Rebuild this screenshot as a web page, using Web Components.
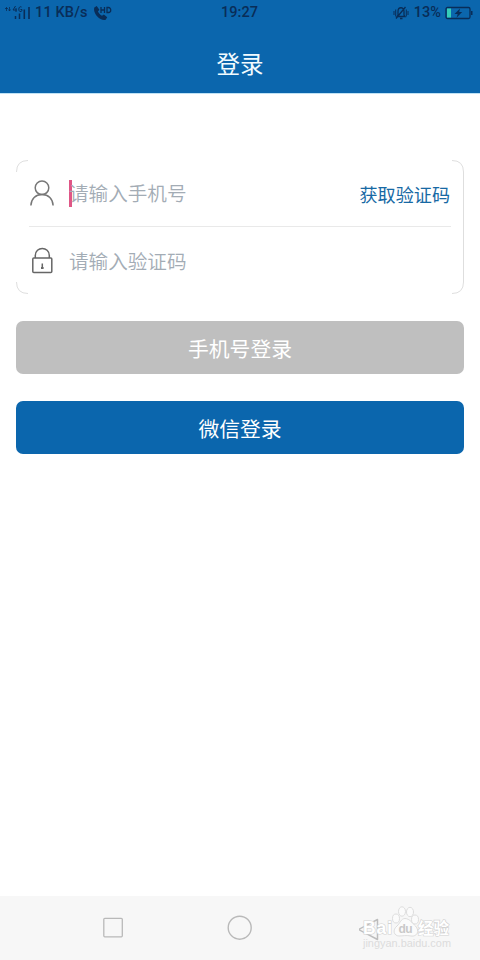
<!DOCTYPE html>
<html lang="zh-CN">
<head>
<meta charset="utf-8">
<title>登录</title>
<style>
html,body{margin:0;height:100%;background:#fff}
body{font-family:Roboto,"Noto Sans CJK SC",sans-serif}
</style>
</head>
<body>
<login-screen></login-screen>
<script>
const define = (name, html) => {
  const t = document.createElement('template');
  t.innerHTML = html;
  customElements.define(name, class extends HTMLElement {
    constructor() {
      super();
      this.attachShadow({ mode: 'open' }).append(t.content.cloneNode(true));
    }
  });
};

define('status-bar', `
<style>
:host{display:grid;grid-template-columns:1fr auto 1fr;align-items:center;height:25px;padding:0 6px 0 5px;color:#092d58;font-size:14.5px;font-weight:500;line-height:25px;white-space:nowrap}
div{display:flex;align-items:center}
.end{justify-content:flex-end}
svg{display:block;flex:none}
</style>
<div>
<svg width="26" height="18" viewBox="0 0 26 18"><g fill="none" stroke="currentColor"><path d="M1.500 3v4M0 4.500h3M4.500 3v4M3.500 5.500l1 1.500 1-1.500" stroke-width=".8"/><path d="M10.500 2l-2.500 4h4M11 4v4M16.500 3c-3-1.500-3.500 4-1.500 4.500 1.500.3 2-.5 2-2h-1.500" stroke-width="1"/><path d="M10.500 12v3M14.500 9.500V15" stroke-width="1.500"/><path d="M19.300 5.500v9.500M24 3v12" stroke-width="1.600"/></g></svg>
<span style="margin-left:-1px;margin-right:5px;padding-left:5px;letter-spacing:.15px">11 KB/s</span>
<svg width="20" height="16" viewBox="0 0 20 16"><path d="M1.300 2.400L3.700 1l2.700 3.700-1.500 1.800c1 2 2.300 3.200 4.100 4.200l1.900-1.300 3.300 2.900-1.500 2.500C7.300 16.500-.5 8.500 1.300 2.400Z" fill="currentColor"/><path d="M8 2v6M11.500 2v6M8 5h3.500M14 2.500v5h1.500c3 0 3-5 0-5Z" fill="none" stroke="currentColor" stroke-width="1.300"/></svg>
</div>
<span>19:27</span>
<div class="end">
<svg width="16" height="14" viewBox="0 0 16 14"><g fill="none" stroke="currentColor"><path d="M1 5v4M2.700 3.500v7M15 5v4M13.300 3.500v7" stroke-width="1"/><path d="M4 10.500h8L11 9V5.500c0-5-6-5-6 0V9ZM7 12.500h2.500M3 12.500L12.500 1" stroke-width="1.300"/></g></svg>
<span style="margin:0 4px 0 5px">13%</span>
<svg width="29" height="14" viewBox="0 0 29 14"><rect x="1" y="1.500" width="24" height="11" rx="1.500" fill="none" stroke="currentColor" stroke-width="1.300"/><rect x="2" y="2.500" width="4" height="9" fill="#35cdb9"/><path d="M26 5h1.500v4H26M15 2.500L9.500 8h3.200L11.500 11.800 17.200 6h-3Z" fill="currentColor"/></svg>
</div>`);

define('app-header', `
<style>
:host{display:block;background:#0b66ad;border-bottom:1px solid #bfe2f5;box-sizing:border-box;flex:none;height:94px}
h1{margin:0;height:68px;line-height:80px;text-align:center;color:#f2fbff;font-size:23.5px;font-weight:400}
</style>
<status-bar></status-bar><h1><slot></slot></h1>`);

define('field-row', `
<style>
:host{display:flex;align-items:center;height:66px;padding-left:1px;color:#a3acb5;font-size:19.6px;font-weight:350}
.icon{width:24px;height:28px;margin-right:15px;flex:none}
.text{flex:1;display:flex;align-items:center;line-height:28px;padding-top:4px}
</style>
<div class="icon"><slot name="icon"></slot></div>
<div class="text"><slot name="caret"></slot><slot></slot></div>
<slot name="action"></slot>`);

define('form-card', `
<style>
:host{display:block;box-sizing:border-box;height:134px;padding:0 13px;position:relative}
.edge{position:absolute;inset:0;width:448px;height:134px;pointer-events:none}
.rule{height:1px;background:#e9e9e9}
svg{display:block}
.caret{width:3px;height:27px;background:#df5686;margin-right:-3px;margin-top:-4px}
.code{color:#1769a4;font-size:18.1px;font-weight:400;padding-top:2px;margin-right:1px}
</style>
<svg class="edge" viewBox="0 0 448 134" fill="none" stroke="#dedede"><path d="M.5 12Q.5.500 12 .5M.5 122Q.500 133.500 12 133.500M436 .5Q447.500.500 447.500 12V122Q447.500 133.500 436 133.500"/></svg>
<field-row>
<svg slot="icon" width="24" height="28" viewBox="0 0 24 28" fill="none" stroke="#777" stroke-width="1.500"><circle cx="12" cy="8.800" r="6.800"/><path d="M.9 26.500C1.200 19.800 5.500 15.600 12 15.600S22.800 19.800 23.100 26.500"/></svg>
<div slot="caret" class="caret"></div>请输入手机号
<span slot="action" class="code">获取验证码</span>
</field-row>
<div class="rule"></div>
<field-row style="height:67px;padding-top:1px;box-sizing:border-box">
<svg slot="icon" width="24" height="28" viewBox="0 0 24 28" fill="none" stroke="#666" stroke-width="1.500"><rect x="2.800" y="11" width="19" height="14.500" rx="1"/><path d="M5.300 11V8.500c0-9.300 14-9.300 14 0V11M12.300 16.500v5"/><path d="M11 20h2.600v2H11Z" fill="#666" stroke="none"/></svg>
请输入验证码
</field-row>`);

define('action-button', `
<style>
:host{display:block;height:53px;border-radius:7px;background:var(--fill);color:#fff;font-size:20.800px;line-height:58px;text-align:center}
</style><slot></slot>`);

define('baidu-mark', `
<style>
:host{display:block;width:94px;height:46px}
svg{display:block}
text{font-family:"Liberation Sans","Noto Sans CJK SC",sans-serif}
</style>
<svg width="94" height="46" viewBox="0 0 94 46">
<path d="M18.500 14.500V34.500L-.5 24.500Z" fill="none" stroke="#bdbdbd" stroke-width="1.500" stroke-linejoin="round"/>
<g fill="#fbfbfb" stroke="#d5d5d5" stroke-width=".8">
<ellipse cx="37" cy="13.500" rx="3.500" ry="4.500"/><ellipse cx="43" cy="6.500" rx="3.500" ry="4.700"/><ellipse cx="51" cy="7" rx="3.500" ry="4.700"/><ellipse cx="56" cy="14.500" rx="3.500" ry="4.500"/>
<path d="M46 13.500c-4 0-5 5-8 7.500-5 4-3 10 2 10 4 0 7-1 12 0 6 1 9-5 4.500-10-3-2.500-6-7.500-10.500-7.500Z"/>
</g>
<g fill="#fff" stroke="#d2d2d2" paint-order="stroke" stroke-width="1.200" font-weight="700">
<text x="4" y="29" font-size="17.500" textLength="29">Bai</text><text x="39.500" y="28" font-size="12" fill="#c9c9c9" stroke="none" textLength="14">du</text><text x="59" y="29" font-size="15.500" textLength="31">经验</text>
</g>
<text x="4" y="42" font-size="10" fill="#dcdcdc" textLength="88" lengthAdjust="spacingAndGlyphs">jingyan.baidu.com</text>
</svg>`);

define('nav-bar', `
<style>
:host{display:grid;grid-template-columns:22px 26px 94px;justify-content:space-between;align-items:center;height:64px;flex:none;padding:0 27px 0 102px;background:#f7f7f7;box-sizing:border-box}
svg{display:block}
.home{margin-left:-2px}
</style>
<svg width="22" height="22" viewBox="0 0 22 22"><rect x="1.800" y="1.300" width="18.500" height="18.500" rx="1" fill="none" stroke="#b9b9b9" stroke-width="1.300"/></svg>
<svg class="home" width="26" height="26" viewBox="0 0 26 26"><circle cx="12.700" cy="12.700" r="11.500" fill="none" stroke="#b9b9b9" stroke-width="1.400"/></svg>
<baidu-mark></baidu-mark>`);

define('login-screen', `
<style>
:host{display:flex;flex-direction:column;width:480px;height:960px;background:#fff;overflow:hidden}
main{flex:1;display:flex;flex-direction:column;gap:27px;padding:66px 16px 0}
</style>
<app-header>登录</app-header>
<main>
<form-card></form-card>
<action-button style="--fill:#bfbfbf">手机号登录</action-button>
<action-button style="--fill:#0b66ad">微信登录</action-button>
</main>
<nav-bar></nav-bar>`);
</script>
</body>
</html>
